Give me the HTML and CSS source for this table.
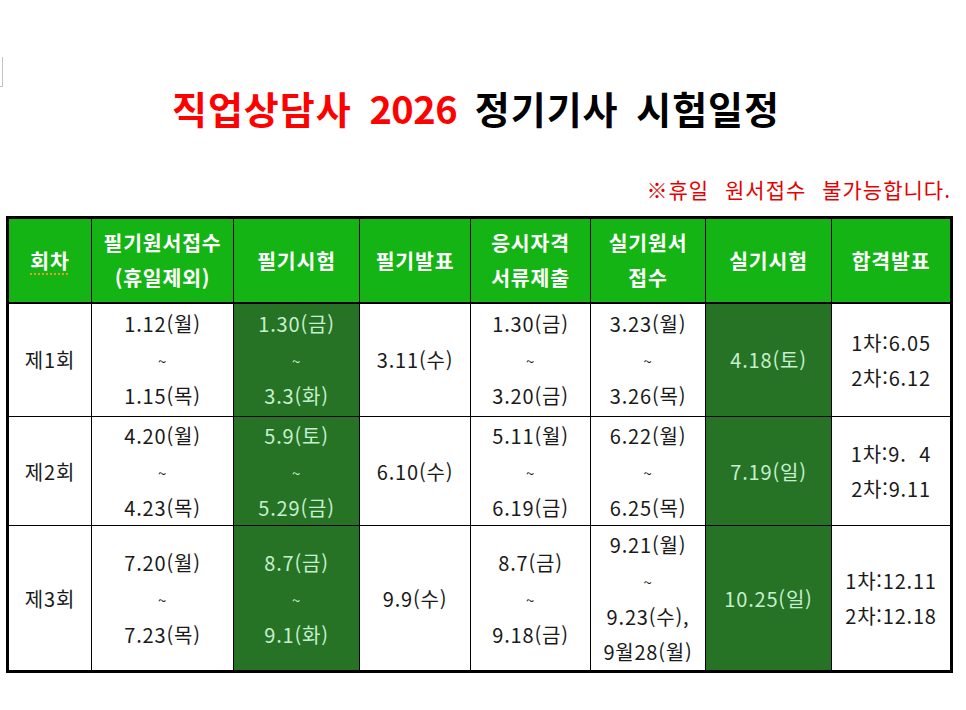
FILE: index.html
```html
<!DOCTYPE html>
<html lang="ko">
<head>
<meta charset="utf-8">
<title>직업상담사 2026 정기기사 시험일정</title>
<link rel="stylesheet" href="styles.css">
</head>
<body>
<div class="corner-mark"></div>
<main class="page">
  <h1 class="title"><span class="title-red">직업상담사 <span class="year">2026</span></span> 정기기사 시험일정</h1>
  <p class="note">※휴일 원서접수 불가능합니다.</p>
  <table class="schedule">
    <colgroup>
      <col class="c1"><col class="c2"><col class="c3"><col class="c4">
      <col class="c5"><col class="c6"><col class="c7"><col class="c8">
    </colgroup>
    <thead>
      <tr class="head-row">
        <th><span class="spell">회차</span></th>
        <th>필기원서접수<br>(휴일제외)</th>
        <th>필기시험</th>
        <th>필기발표</th>
        <th>응시자격<br>서류제출</th>
        <th>실기원서<br>접수</th>
        <th>실기시험</th>
        <th>합격발표</th>
      </tr>
    </thead>
    <tbody>
      <tr class="row1">
        <td>제1회</td>
        <td>1.12(월)<br><span class="tilde">~</span><br>1.15(목)</td>
        <td class="dark">1.30(금)<br><span class="tilde">~</span><br>3.3(화)</td>
        <td>3.11(수)</td>
        <td>1.30(금)<br><span class="tilde">~</span><br>3.20(금)</td>
        <td>3.23(월)<br><span class="tilde">~</span><br>3.26(목)</td>
        <td class="dark">4.18(토)</td>
        <td class="result">1차:6.05<br>2차:6.12</td>
      </tr>
      <tr class="row2">
        <td>제2회</td>
        <td>4.20(월)<br><span class="tilde">~</span><br>4.23(목)</td>
        <td class="dark">5.9(토)<br><span class="tilde">~</span><br>5.29(금)</td>
        <td>6.10(수)</td>
        <td>5.11(월)<br><span class="tilde">~</span><br>6.19(금)</td>
        <td>6.22(월)<br><span class="tilde">~</span><br>6.25(목)</td>
        <td class="dark">7.19(일)</td>
        <td class="result">1차:9.  4<br>2차:9.11</td>
      </tr>
      <tr class="row3">
        <td>제3회</td>
        <td>7.20(월)<br><span class="tilde">~</span><br>7.23(목)</td>
        <td class="dark">8.7(금)<br><span class="tilde">~</span><br>9.1(화)</td>
        <td>9.9(수)</td>
        <td>8.7(금)<br><span class="tilde">~</span><br>9.18(금)</td>
        <td>9.21(월)<br><span class="tilde">~</span><br>9.23(수),<br>9월28(월)</td>
        <td class="dark">10.25(일)</td>
        <td class="result">1차:12.11<br>2차:12.18</td>
      </tr>
    </tbody>
  </table>
</main>
</body>
</html>
```

FILE: styles.css
```css
html, body {
  margin: 0;
  padding: 0;
  background: #ffffff;
}

body {
  font-family: "Noto Sans CJK KR", "Noto Sans", sans-serif;
  color: #1a1a1a;
  position: relative;
  width: 966px;
  height: 710px;
  overflow: hidden;
}

.corner-mark {
  position: absolute;
  left: 0;
  top: 57px;
  width: 2px;
  height: 29px;
  border-right: 1px solid #c4c4c4;
  border-bottom: 1px solid #c4c4c4;
}

.page {
  display: flex;
  flex-direction: column;
  padding: 86px 0 0 6px;
  width: 947px;
}

.title {
  margin: 0;
  height: 44px;
  line-height: 44px;
  font-size: 38px;
  font-weight: 700;
  text-align: center;
  color: #000;
  word-spacing: 6px;
  letter-spacing: 1px;
  padding-right: 7px;
}

.title-red {
  color: #ff0000;
}

.year {
  letter-spacing: -0.5px;
}

.note {
  margin: 45px 0 0 0;
  height: 28px;
  line-height: 28px;
  font-size: 21px;
  color: #e60000;
  text-align: right;
  word-spacing: 9px;
  letter-spacing: 1px;
  padding-right: 2px;
}

.schedule {
  margin-top: 13px;
  width: 947px;
  table-layout: fixed;
  border-collapse: collapse;
  border: 3px solid #000;
  font-size: 20px;
  letter-spacing: 0.8px;
  line-height: 35px;
  text-align: center;
}

.c1 { width: 84px; }
.c2 { width: 142px; }
.c3 { width: 126px; }
.c4 { width: 111px; }
.c5 { width: 120px; }
.c6 { width: 115px; }
.c7 { width: 126px; }
.c8 { width: 120px; }

.schedule th,
.schedule td {
  border: 1px solid #000;
  padding: 0;
  vertical-align: middle;
}

.schedule th {
  background: #14b414;
  color: #ffffff;
  font-weight: 700;
  font-size: 20.5px;
  letter-spacing: 0.8px;
  border-bottom: 2px solid #000;
}

.head-row { height: 85px; }
.row1 { height: 114px; }
.row2 { height: 109px; }
.row3 { height: 146px; }

.spell {
  text-decoration: underline dotted #e0a020;
  text-underline-offset: 5px;
}

.schedule td.dark {
  background: #267326;
  color: #c6efce;
}

.tilde {
  font-size: 15px;
}

.result {
  white-space: pre;
}
```
